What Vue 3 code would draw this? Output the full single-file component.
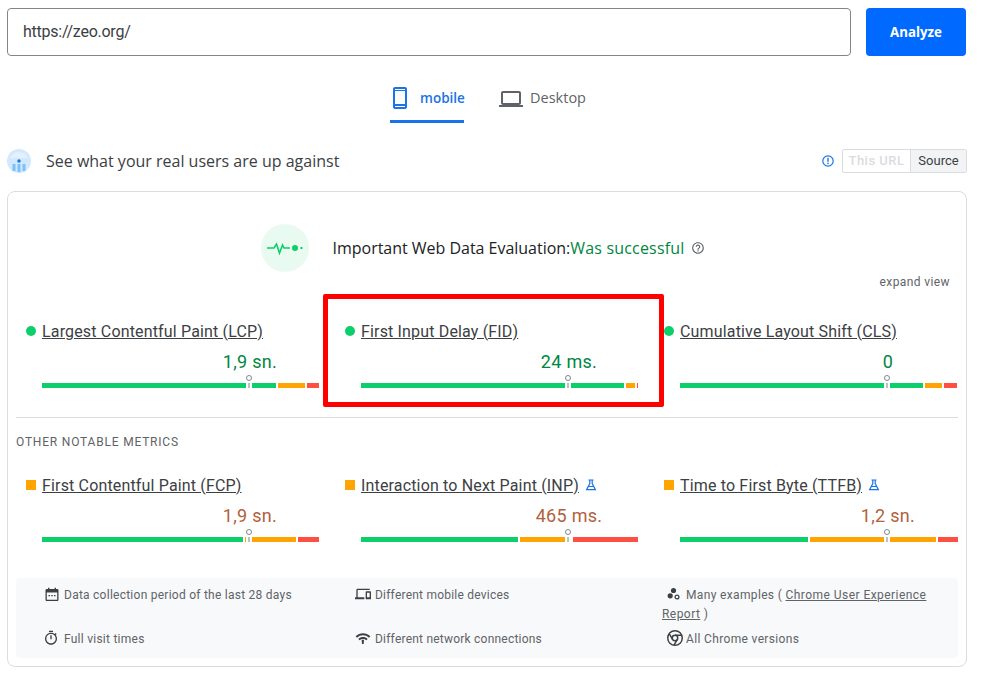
<script setup>
const pct = [
  { name: 'Largest Contentful Paint (LCP)', value: '1,9 sn.', segs: [234, 27, 12], exp: false },
  { name: 'First Input Delay (FID)', value: '24 ms.', segs: [263, 9, 1], exp: false, box: true },
  { name: 'Cumulative Layout Shift (CLS)', value: '0', segs: [243, 17, 13], exp: false }
]
const other = [
  { name: 'First Contentful Paint (FCP)', value: '1,9 sn.', segs: [201, 51, 21], exp: false },
  { name: 'Interaction to Next Paint (INP)', value: '465 ms.', segs: [157, 51, 65], exp: true },
  { name: 'Time to First Byte (TTFB)', value: '1,2 sn.', segs: [128, 126, 20], exp: true }
]
const segColors = ['#0cce6b', '#ffa400', '#ff4e42']
</script>

<template>
  <div class="page">
    <div class="search">
      <div class="url">https://zeo.org/</div>
      <button class="analyze">Analyze</button>
    </div>

    <div class="tabs">
      <div class="tab active">
        <svg class="tab-ico phone" viewBox="0 0 24 24"><path fill="#1a73e8" d="M17 1.01L7 1c-1.1 0-2 .9-2 2v18c0 1.1.9 2 2 2h10c1.1 0 2-.9 2-2V3c0-1.1-.9-1.99-2-1.99zM17 21H7v-1h10v1zm0-3H7V5h10v13zM7 4V3h10v1H7z"/></svg>
        <span>mobile</span>
      </div>
      <div class="tab">
        <svg class="tab-ico" viewBox="0 0 24 24"><path fill="#5f6368" d="M20 18c1.1 0 1.99-.9 1.99-2L22 6c0-1.1-.9-2-2-2H4c-1.1 0-2 .9-2 2v10c0 1.1.9 2 2 2H0v2h24v-2h-4zM4 6h16v10H4V6z"/></svg>
        <span>Desktop</span>
      </div>
    </div>

    <div class="head">
      <svg class="head-ico" viewBox="0 0 24 24">
        <circle cx="12" cy="12" r="12" fill="#d2e8fe"/>
        <path d="M3 9a10 10 0 0 1 18 0z" fill="#e3f0fe"/>
        <circle cx="12" cy="12" r="1.7" fill="#1a73e8"/>
        <rect x="5.5" y="15" width="3" height="7" fill="#7cc0f8"/>
        <rect x="10.5" y="15" width="3" height="8" fill="#7cc0f8"/>
        <rect x="15.5" y="15" width="3" height="7" fill="#7cc0f8"/>
      </svg>
      <h2>See what your real users are up against</h2>
      <svg class="info-ico" viewBox="0 0 12 12">
        <circle cx="6" cy="6" r="5.2" fill="none" stroke="#1a73e8" stroke-width="1.2"/>
        <rect x="5.3" y="2.8" width="1.4" height="4" fill="#1a73e8"/>
        <rect x="5.3" y="7.7" width="1.4" height="1.4" fill="#1a73e8"/>
      </svg>
      <div class="toggle">
        <span class="off">This URL</span>
        <span class="on">Source</span>
      </div>
    </div>

    <div class="card">
      <div class="hero">
        <div class="pulse">
          <svg width="48" height="48" viewBox="0 0 48 48">
            <path d="M6 24h7l2.500-4 3 9 3-8 1.500 3h6" fill="none" stroke="#0cce6b" stroke-width="1.6"/>
            <circle cx="34" cy="24" r="3" fill="#0cce6b"/>
            <rect x="39.5" y="23" width="2" height="2" fill="#0cce6b"/>
          </svg>
        </div>
        <div class="verdict">Important Web Data Evaluation:<span>Was successful</span></div>
        <svg class="help" viewBox="0 0 24 24"><path fill="#5f6368" d="M11 18h2v-2h-2v2zm1-16C6.480 2 2 6.480 2 12s4.480 10 10 10 10-4.480 10-10S17.520 2 12 2zm0 18c-4.410 0-8-3.590-8-8s3.590-8 8-8 8 3.590 8 8-3.590 8-8 8zm0-14c-2.210 0-4 1.790-4 4h2c0-1.100.9-2 2-2s2 .9 2 2c0 2-3 1.750-3 5h2c0-2.250 3-2.500 3-5 0-2.210-1.790-4-4-4z"/></svg>
      </div>
      <div class="expand">expand view</div>

      <div class="metrics top">
        <div v-for="m in pct" :key="m.name" class="metric">
          <div class="label">
            <i class="dot"></i>
            <a>{{ m.name }}</a>
          </div>
          <div class="value good"><span>{{ m.value }}</span></div>
          <div class="bar">
            <b v-for="(w, i) in m.segs" :key="i" :style="{ width: w + 'px', background: segColors[i] }"></b>
            <em class="marker"></em>
          </div>
          <div v-if="m.box" class="redbox"></div>
        </div>
      </div>

      <div class="divider"></div>
      <div class="section">OTHER NOTABLE METRICS</div>

      <div class="metrics">
        <div v-for="m in other" :key="m.name" class="metric">
          <div class="label">
            <i class="square"></i>
            <a>{{ m.name }}</a>
            <svg v-if="m.exp" class="flask" viewBox="0 0 12 12"><path d="M3.500 1h5M4.800 1v3.500L1.600 10.600h8.800L7.200 4.500V1M3.400 7.500h5.200" fill="none" stroke="#1a73e8" stroke-width="1.2"/></svg>
          </div>
          <div class="value avg"><span>{{ m.value }}</span></div>
          <div class="bar">
            <b v-for="(w, i) in m.segs" :key="i" :style="{ width: w + 'px', background: segColors[i] }"></b>
            <em class="marker"></em>
          </div>
        </div>
      </div>

      <div class="notes">
        <div class="note first">
          <svg viewBox="0 0 14 14"><path fill="#3c4043" fill-rule="evenodd" d="M1.800 2H3V.8h1.400V2h5.200V.8H11V2h1.200c.7 0 1.300.6 1.300 1.300v9.400c0 .7-.6 1.300-1.300 1.300H1.800C1.100 14 .5 13.400.5 12.700V3.300C.5 2.600 1.100 2 1.800 2zM1.800 5.500v7.200h10.400V5.500zM3.500 8h1.500v1.300H3.500zM6.300 8h1.500v1.300H6.300zM9 8h1.500v1.300H9z"/></svg>
          <span>Data collection period of the last 28 days</span>
        </div>
        <div class="note second">
          <svg class="wide" viewBox="0 0 24 24"><path fill="#3c4043" d="M4 6h18V4H4c-1.100 0-2 .9-2 2v11H0v3h14v-3H4V6zm19 2h-6c-.55 0-1 .45-1 1v10c0 .55.45 1 1 1h6c.55 0 1-.45 1-1V9c0-.55-.45-1-1-1zm-1 9h-4v-7h4v7z"/></svg>
          <span>Different mobile devices</span>
        </div>
        <div class="note third">
          <svg class="groups" viewBox="0 0 14 14"><circle cx="6.500" cy="3.500" r="2.600" fill="#3c4043"/><circle cx="3.200" cy="8.800" r="2.600" fill="#3c4043"/><circle cx="10" cy="10" r="1.900" fill="none" stroke="#3c4043" stroke-width="1.300"/></svg>
          <span>Many examples ( <a>Chrome User Experience Report</a> )</span>
        </div>
        <div class="note first">
          <svg class="timer" viewBox="0 0 24 24"><path fill="#3c4043" d="M15 1H9v2h6V1zm-4 13h2V8h-2v6zm8.030-6.610l1.420-1.420c-.43-.51-.9-.99-1.410-1.410l-1.420 1.420C16.070 4.740 14.120 4 12 4c-4.970 0-9 4.030-9 9s4.020 9 9 9 9-4.030 9-9c0-2.120-.74-4.070-1.970-5.610zM12 20c-3.870 0-7-3.130-7-7s3.130-7 7-7 7 3.130 7 7-3.130 7-7 7z"/></svg>
          <span>Full visit times</span>
        </div>
        <div class="note second">
          <svg class="wide" viewBox="0 0 24 24"><path fill="#3c4043" d="M1 9.500l2 2c4.970-4.970 13.030-4.970 18 0l2-2C16.930 3.430 7.080 3.430 1 9.500zm4 4l2 2c2.760-2.760 7.240-2.760 10 0l2-2c-3.860-3.860-10.130-3.860-14 0zM10 14.500h3.500l-.5 6.500h-2.500z"/></svg>
          <span>Different network connections</span>
        </div>
        <div class="note third">
          <svg class="chrome" viewBox="1 1 22 22" fill="none" stroke="#3c4043" stroke-width="2"><circle cx="12" cy="12" r="10"/><circle cx="12" cy="12" r="3.800"/><path d="M12 8.200h9.300M8.700 14L4 6M15.300 14l-4.700 7.800"/></svg>
          <span>All Chrome versions</span>
        </div>
      </div>
    </div>
  </div>
</template>

<style scoped>
.page {
  width: 960px;
  margin-left: 7px;
  padding-top: 8px;
  font-family: Roboto, "Liberation Sans", sans-serif;
  color: #3c4043;
}
.search {
  display: flex;
  gap: 15px;
  padding-right: 1px;
}
.url {
  flex: 1;
  height: 48px;
  box-sizing: border-box;
  border: 1px solid #80868b;
  border-radius: 4px;
  padding-left: 15px;
  line-height: 46px;
  font-size: 16px;
  letter-spacing: -.25px;
  color: #3c4043;
}
.analyze {
  width: 100px;
  height: 48px;
  border: 0;
  border-radius: 4px;
  background: #0069ff;
  color: #fff;
  font: 700 13.300px "Open Sans", sans-serif;
}
.tabs {
  display: flex;
  justify-content: center;
  gap: 35px;
  margin-top: 24px;
  margin-left: 2px;
  height: 43px;
}
.tab {
  display: flex;
  align-items: flex-start;
  gap: 7px;
  box-sizing: border-box;
  height: 43px;
  font: 500 14.500px "Open Sans", sans-serif;
  color: #5f6368;
  line-height: 36px;
}
.tab.active {
  width: 74px;
  color: #1a73e8;
  border-bottom: 3px solid #1a73e8;
  font-size: 13.500px;
  font-weight: 600;
  gap: 2px;
}
.tab-ico {
  width: 24px;
  height: 24px;
  margin-top: 7px;
}
.phone {
  margin-top: 6px;
  margin-left: -2px;
  margin-right: 6px;
  flex: none;
}
.head {
  display: flex;
  align-items: center;
  margin-top: 25px;
  height: 26px;
}
.head-ico {
  width: 24px;
  height: 24px;
}
h2 {
  flex: 1;
  margin: 0 0 1px 15px;
  font: 500 16px "Open Sans", sans-serif;
  color: #3c4043;
}
.info-ico {
  width: 12px;
  height: 12px;
  margin-right: 8px;
}
.toggle {
  display: flex;
  height: 24px;
  box-sizing: border-box;
  border: 1px solid #dadce0;
  border-radius: 2px;
  font-size: 13px;
  line-height: 22px;
}
.off {
  width: 67px;
  text-align: center;
  color: #dadce0;
  font-weight: 500;
  letter-spacing: .5px;
}
.on {
  width: 55px;
  text-align: center;
  background: #f1f3f4;
  border-left: 1px solid #dadce0;
}
.card {
  margin-top: 17px;
  height: 476px;
  box-sizing: border-box;
  border: 1px solid #dadce0;
  border-radius: 8px;
  padding: 0 8px;
}
.hero {
  display: flex;
  align-items: center;
  justify-content: center;
  padding: 32px 8px 0 0;
}
.pulse {
  width: 48px;
  height: 48px;
  border-radius: 50%;
  background: #e9faf1;
  margin-right: 24px;
}
.verdict {
  font: 500 16px "Open Sans", sans-serif;
  letter-spacing: -.02px;
  color: #202124;
}
.verdict span {
  color: #018642;
  letter-spacing: .18px;
}
.help {
  width: 14px;
  height: 14px;
  margin-left: 7px;
}
.expand {
  margin-top: 2px;
  padding-right: 8px;
  text-align: right;
  font-size: 12px;
  line-height: 16px;
  letter-spacing: .4px;
  color: #5f6368;
}
.metrics {
  display: grid;
  grid-template-columns: 319px 319px 304px;
}
.metrics.top {
  margin-top: 30px;
}
.metric {
  position: relative;
  padding-left: 26px;
}
.label {
  display: flex;
  align-items: center;
  height: 22px;
  position: relative;
  font-size: 16px;
  letter-spacing: .16px;
}
.label a {
  text-decoration: underline;
  color: #3c4043;
}
.dot, .square {
  position: absolute;
  left: -16px;
  width: 10px;
  height: 10px;
  background: #0cce6b;
}
.dot {
  border-radius: 50%;
}
.square {
  background: #ffa400;
}
.flask {
  width: 12px;
  height: 12px;
  margin-left: 6px;
}
.value {
  display: flex;
  justify-content: center;
  width: 0;
  margin-left: 208px;
  margin-top: 9px;
  height: 22px;
  line-height: 22px;
  white-space: nowrap;
  font-size: 18px;
  letter-spacing: .3px;
}
.value.good {
  color: #018642;
}
.value.avg {
  color: #b3603c;
}
.bar {
  position: relative;
  display: flex;
  gap: 2px;
  margin-top: 10px;
  height: 5px;
}
.bar b {
  display: block;
  height: 5px;
}
.marker {
  position: absolute;
  left: 204px;
  top: 0;
  width: 6px;
  height: 5px;
  background: #fff;
}
.marker::before {
  content: "";
  position: absolute;
  left: 2px;
  top: 0;
  width: 2px;
  height: 5px;
  background: #b8c4bd;
}
.marker::after {
  content: "";
  position: absolute;
  left: 0;
  top: -8px;
  width: 6px;
  height: 6px;
  box-sizing: border-box;
  border: 1px solid #80868b;
  border-radius: 50%;
  background: #fff;
}
.redbox {
  position: absolute;
  left: -12px;
  top: -26px;
  width: 341px;
  height: 113px;
  box-sizing: border-box;
  border: 5px solid #ff0000;
  border-radius: 2px;
}
.divider {
  margin-top: 29px;
  border-top: 1px solid #dadce0;
}
.section {
  margin-top: 16px;
  height: 16px;
  line-height: 16px;
  font-size: 12px;
  letter-spacing: .8px;
  color: #5f6368;
}
.section + .metrics {
  margin-top: 24px;
}
.notes {
  display: grid;
  grid-template-columns: 339px 307px 296px;
  grid-template-rows: 44px 36px;
  margin-top: 36px;
  height: 80px;
  border-radius: 4px;
  background: #f8f9fa;
  font-size: 12px;
  line-height: 19px;
  color: #5f6368;
}
.note {
  padding-top: 8px;
}
.note svg {
  width: 14px;
  height: 14px;
  vertical-align: -2px;
  margin-right: 5px;
}
.note svg.wide, .note svg.timer {
  width: 16px;
  height: 16px;
  vertical-align: -3px;
  margin-right: 4px;
}
.note svg.timer {
  margin-left: -2px;
  margin-right: 5px;
}
.note svg.chrome {
  width: 16px;
  height: 16px;
  vertical-align: -3px;
  margin-right: 3px;
}
.note.first {
  padding-left: 29px;
  letter-spacing: .25px;
}
.note.second {
  padding-left: 0;
  letter-spacing: .22px;
}
.note.third {
  text-indent: 5px;
  padding-left: 0;
  letter-spacing: .35px;
}
.note a {
  text-decoration: underline;
  letter-spacing: .45px;
}
</style>
